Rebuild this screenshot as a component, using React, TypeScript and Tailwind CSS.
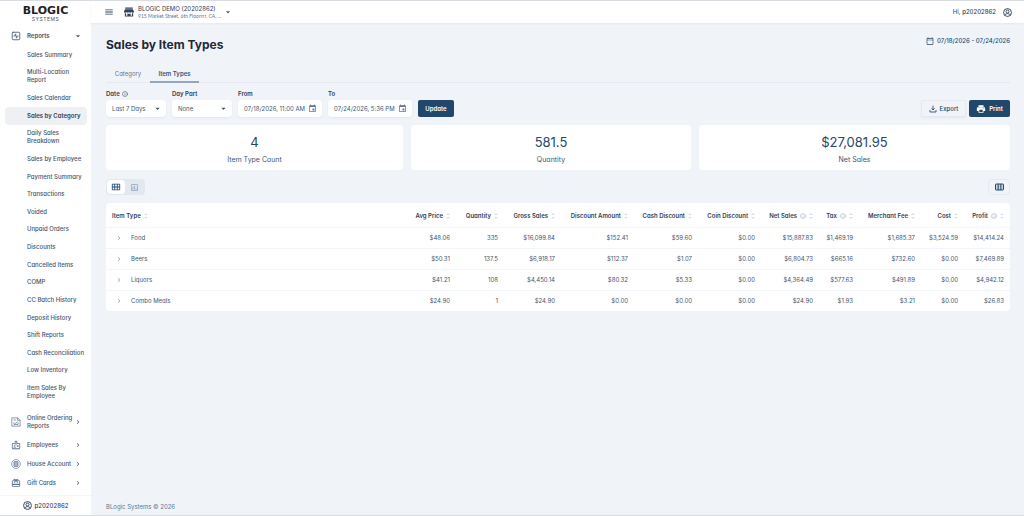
import React, { useState } from "react";
import { FaCaretDown } from "react-icons/fa";
import {
  MdCardGiftcard,
  MdChevronRight,
  MdEvent,
  MdMenu,
  MdOutlineBadge,
  MdOutlineCalendarToday,
  MdOutlineCalendarViewMonth,
  MdOutlinePoll,
  MdPrint,
} from "react-icons/md";
import { Info, SquareActivity } from "lucide-react";

const reports = [
  "Sales Summary",
  "Multi-Location Report",
  "Sales Calendar",
  "Sales by Category",
  "Daily Sales Breakdown",
  "Sales by Employee",
  "Payment Summary",
  "Transactions",
  "Voided",
  "Unpaid Orders",
  "Discounts",
  "Cancelled Items",
  "COMP",
  "CC Batch History",
  "Deposit History",
  "Shift Reports",
  "Cash Reconciliation",
  "Low Inventory",
  "Item Sales By Employee",
];

const columns = [
  { name: "Avg Price", width: "w-[48px]" },
  { name: "Quantity", width: "w-[48px]" },
  { name: "Gross Sales", width: "w-[57px]" },
  { name: "Discount Amount", width: "w-[73px]" },
  { name: "Cash Discount", width: "w-[64px]" },
  { name: "Coin Discount", width: "w-[63px]" },
  { name: "Net Sales", width: "w-[58px]", info: true },
  { name: "Tax", width: "w-[40px]", info: true },
  { name: "Merchant Fee", width: "w-[62px]" },
  { name: "Cost", width: "w-[43px]" },
  { name: "Profit", width: "w-[46px]", info: true },
];

const rows = [
  {
    name: "Food",
    values: ["$48.06", "335", "$16,099.84", "$152.41", "$59.60", "$0.00", "$15,887.83", "$1,469.19", "$1,685.37", "$3,524.59", "$14,414.24"],
  },
  {
    name: "Beers",
    values: ["$50.31", "137.5", "$6,918.17", "$112.37", "$1.07", "$0.00", "$6,804.73", "$665.16", "$732.60", "$0.00", "$7,469.89"],
  },
  {
    name: "Liquors",
    values: ["$41.21", "108", "$4,450.14", "$80.32", "$5.33", "$0.00", "$4,364.49", "$577.63", "$491.89", "$0.00", "$4,942.12"],
  },
  {
    name: "Combo Meals",
    values: ["$24.90", "1", "$24.90", "$0.00", "$0.00", "$0.00", "$24.90", "$1.93", "$3.21", "$0.00", "$26.83"],
  },
];

const stats = [
  { value: "4", label: "Item Type Count" },
  { value: "581.5", label: "Quantity" },
  { value: "$27,081.95", label: "Net Sales" },
];

function StoreIcon() {
  return (
    <svg viewBox="0 0 24 24" className="size-[10px] shrink-0 text-[#334155]" fill="currentColor" aria-hidden="true">
      <path d="M3 1h18v3H3zM2.5 5.5h19L24 11c0 2-1.300 3-3 3s-2.500-1-3-2c-.5 1-1.500 2-3 2s-2.500-1-3-2c-.5 1-1.500 2-3 2s-2.500-1-3-2c-.5 1-1.300 2-3 2s-3-1-3-3z" />
      <path d="M2 15h3v6h3v-5h8v5h3v-6h3v8H2zM10 18h4v3h-4z" />
    </svg>
  );
}

function UserIcon() {
  return (
    <svg viewBox="0 0 24 24" className="size-[9px] shrink-0" fill="none" stroke="currentColor" strokeWidth="2.5" aria-hidden="true">
      <circle cx="12" cy="12" r="10.5" />
      <circle cx="12" cy="9.5" r="4" />
      <path d="M4.5 19c2-3 4.500-4 7.500-4s5.500 1 7.500 4" />
    </svg>
  );
}

function OrderingIcon() {
  return (
    <svg viewBox="0 0 24 24" className="size-[10px]" fill="none" stroke="currentColor" strokeWidth="1.7" aria-hidden="true">
      <path d="M16 2H2v20h20V8zM16 2v6h6M7 13v5h10v-5M9 14l2 2 5-5M6 7h6" />
    </svg>
  );
}

function HouseAccountIcon() {
  return (
    <svg viewBox="0 0 24 24" className="size-[10px]" fill="none" stroke="currentColor" strokeWidth="1.7" aria-hidden="true">
      <circle cx="12" cy="12" r="10.5" />
      <path d="M8 6h8v12H8zM6 9h12M6 12h12M6 15h12" />
    </svg>
  );
}

function ExportIcon() {
  return (
    <svg viewBox="0 0 24 24" className="size-2" fill="none" stroke="currentColor" strokeWidth="2.5" aria-hidden="true">
      <path d="M12 2v13M7 10l5 5 5-5M3 15v6h18v-6" />
    </svg>
  );
}

function ColumnsIcon() {
  return (
    <svg viewBox="0 0 27 24" className="h-2 w-[9px]" fill="none" stroke="currentColor" strokeWidth="3" aria-hidden="true">
      <rect x="1.5" y="3" width="24" height="18" rx="2" className="fill-[#c5d3e0]" />
      <path d="M9.5 3v18M17.5 3v18" />
    </svg>
  );
}

function Sorter() {
  return (
    <svg viewBox="0 0 8 12" className="h-[6px] w-1 shrink-0 text-slate-400" fill="none" stroke="currentColor" aria-hidden="true">
      <path d="M1.5 4L4 1.5L6.5 4M1.5 8L4 10.5L6.5 8" />
    </svg>
  );
}

function Select({ id, label, value, info }: { id: string; label: string; value: string; info?: boolean }) {
  return (
    <div className="w-[60px]">
      <label htmlFor={id} className="flex h-2 items-center gap-0.5 text-[6px] font-semibold text-[#334155]">
        {label}
        {info && <Info className="size-[6px]" strokeWidth={2} />}
      </label>
      <div className="relative mt-0.5">
        <select
          id={id}
          className="h-[17px] w-full appearance-none rounded-sm bg-white pl-[6px] text-[6px] text-slate-600 shadow-xs"
        >
          <option>{value}</option>
        </select>
        <FaCaretDown className="pointer-events-none absolute top-[5px] right-[5px] size-[7px] text-slate-600" />
      </div>
    </div>
  );
}

function DateInput({ id, label, value }: { id: string; label: string; value: string }) {
  return (
    <div className="w-[84px]">
      <label htmlFor={id} className="flex h-2 items-center text-[6px] font-semibold text-[#334155]">
        {label}
      </label>
      <div className="mt-0.5 flex h-[17px] items-center rounded-sm bg-white pr-[5px] pl-[6px] shadow-xs">
        <input id={id} defaultValue={value} className="w-full min-w-0 text-[6px] text-slate-600 outline-none" />
        <MdEvent className="size-[9px] shrink-0 text-slate-500" />
      </div>
    </div>
  );
}

export default function App() {
  const [view, setView] = useState<"table" | "chart">("table");

  const groups = [
    { name: "Online Ordering Reports", icon: <OrderingIcon />, height: "h-[26px]" },
    { name: "Employees", icon: <MdOutlineBadge className="size-[10px]" />, height: "h-[19px]" },
    { name: "House Account", icon: <HouseAccountIcon />, height: "h-[19px]" },
    { name: "Gift Cards", icon: <MdCardGiftcard className="size-[10px]" />, height: "h-[19px]" },
  ];

  return (
    <div className="flex min-h-screen border-y border-[#d9dce0] bg-[#f0f4f9] font-['Inter','Liberation_Sans',sans-serif] text-[6px] leading-[8px] text-[#334155] [font-feature-settings:'cv11']">
      <aside className="flex w-[91px] shrink-0 flex-col bg-white">
        <a href="#home" className="block pt-[5px] text-center text-[#222]">
          <span className="block font-['DejaVu_Sans',sans-serif] text-[11px] leading-[10px] font-bold">BLOGIC</span>
          <span className="block text-[5px] leading-[6px] tracking-widest text-slate-600">SYSTEMS</span>
        </a>

        <nav className="flex flex-1 flex-col font-medium text-slate-600">
          <button className="mt-1 flex h-[20px] items-center pr-[10px] pl-[11px] text-left font-semibold">
            <SquareActivity className="mr-[6px] size-[10px]" />
            <span className="flex-1">Reports</span>
            <FaCaretDown className="size-[6px]" />
          </button>
          <ul className="flex grow flex-col pr-1 pl-[5px]">
            {reports.map((name) => (
              <li key={name} className="flex grow">
                <a
                  href="#report"
                  className={
                    name === "Sales by Category"
                      ? "flex flex-1 items-center rounded-sm bg-[#eef0f3] py-[3px] pl-[22px] font-semibold text-slate-700"
                      : "flex flex-1 items-center py-[3px] pr-[2px] pl-[22px]"
                  }
                >
                  {name}
                </a>
              </li>
            ))}
          </ul>
          <div className="mt-1 mb-[3px]">
            {groups.map((g) => (
              <button key={g.name} className={`flex w-full items-center pr-[9px] pl-[11px] text-left ${g.height}`}>
                <span className="mr-[6px] w-[10px] shrink-0 text-slate-500">{g.icon}</span>
                <span className="flex-1">{g.name}</span>
                <MdChevronRight className="-ml-px size-2 shrink-0" />
              </button>
            ))}
          </div>
        </nav>

        <div className="flex h-[20px] items-center justify-center gap-[3px] border-t border-slate-100 font-medium text-slate-700">
          <UserIcon />
          p20202862
        </div>
      </aside>

      <div className="flex min-w-0 flex-1 flex-col">
        <header className="flex h-[22px] items-center bg-white pr-[12px] pl-[13px] shadow-xs">
          <button aria-label="Toggle menu">
            <MdMenu className="size-[10px] text-slate-700" />
          </button>
          <button className="ml-[10px] flex items-center text-left">
            <StoreIcon />
            <span className="ml-1 block">
              <span className="block text-slate-700">BLOGIC DEMO (20202862)</span>
              <span className="block font-['Lato',sans-serif] text-[5px] leading-[7px] text-slate-500">
                915 Market Street, 6th Floorrrr, CA, ...
              </span>
            </span>
            <FaCaretDown className="ml-1 size-[6px] text-slate-600" />
          </button>
          <div className="ml-auto flex items-center gap-[7px]">
            <span>
              Hi, <span className="font-medium">p20202862</span>
            </span>
            <UserIcon />
          </div>
        </header>

        <main className="flex-1 pr-[14px] pl-[15px]">
          <div className="flex h-[36px] items-start justify-between pt-[14px]">
            <h1 className="text-[12px] leading-[16px] font-bold text-[#1e293b]">Sales by Item Types</h1>
            <div className="flex items-center gap-[3px] font-medium text-[#24476b]">
              <MdOutlineCalendarToday className="size-2" />
              07/18/2026 - 07/24/2026
            </div>
          </div>

          <div className="mt-[6px] flex h-[18px] border-b border-[#e6eaf0]">
            <button className="w-[44px] text-slate-500">Category</button>
            <button className="-mb-px w-[49px] border-b-2 border-[#8fa8c0] pt-px font-semibold text-[#34567a]">Item Types</button>
          </div>

          <div className="mt-[7px] flex items-end">
            <div className="flex items-end gap-[6px]">
              <Select id="date" label="Date" value="Last 7 Days" info />
              <Select id="day-part" label="Day Part" value="None" />
              <DateInput id="from" label="From" value="07/18/2026, 11:00 AM" />
              <DateInput id="to" label="To" value="07/24/2026, 5:36 PM" />
              <button className="h-[17px] w-[36px] rounded-xs bg-[#21476b] font-semibold text-white">Update</button>
            </div>
            <div className="ml-auto flex gap-[3px]">
              <button className="flex h-[17px] w-[45px] items-center justify-center gap-[3px] rounded-xs border border-[#e6eaf0] font-medium text-[#24476b] shadow-xs">
                <ExportIcon />
                Export
              </button>
              <button className="flex h-[17px] w-[41px] items-center justify-center gap-[3px] rounded-xs bg-[#21476b] font-semibold text-white">
                <MdPrint className="size-[10px]" />
                Print
              </button>
            </div>
          </div>

          <section className="mt-2 grid grid-cols-[297fr_280fr_311fr] gap-2">
            {stats.map((s) => (
              <div key={s.label} className="h-[45px] rounded-sm bg-white pt-[9px] text-center">
                <p className="text-[13px] leading-[16px] text-[#24476b]">{s.value}</p>
                <p className="mt-[5px] text-[7px] leading-[10px] text-slate-600">{s.label}</p>
              </div>
            ))}
          </section>

          <div className="mt-[9px] flex items-center justify-between">
            <div className="flex h-[16px] rounded-sm bg-[#e1e8f0] p-px">
              <button
                aria-label="Table view"
                onClick={() => setView("table")}
                className={`flex w-[18px] items-center justify-center rounded-sm ${view === "table" ? "bg-white text-[#24476b]" : "text-slate-400"}`}
              >
                <MdOutlineCalendarViewMonth className="size-[10px]" />
              </button>
              <button
                aria-label="Chart view"
                onClick={() => setView("chart")}
                className={`flex w-[19px] items-center justify-center rounded-sm ${view === "chart" ? "bg-white text-[#24476b]" : "text-slate-400"}`}
              >
                <MdOutlinePoll className="size-[9px]" />
              </button>
            </div>
            <button
              aria-label="Choose columns"
              className="flex h-[16px] w-[22px] items-center justify-center rounded-sm border border-[#e6eaf0] text-[#24476b]"
            >
              <ColumnsIcon />
            </button>
          </div>

          <div className="mt-2 overflow-hidden rounded-sm bg-white">
            <table className="w-full table-fixed whitespace-nowrap">
              <thead>
                <tr className="h-[24px] border-b border-slate-100">
                  <th className="pt-[3px] pl-[6px] text-left font-semibold">
                    <span className="flex items-center gap-[3px]">
                      Item Type
                      <Sorter />
                    </span>
                  </th>
                  {columns.map((c) => (
                    <th key={c.name} className={`pt-[3px] pr-[6px] font-semibold ${c.width}`}>
                      <span className="flex items-center justify-end gap-[3px]">
                        {c.name}
                        {c.info && <Info className="size-[6px] shrink-0 text-slate-400" />}
                        <Sorter />
                      </span>
                    </th>
                  ))}
                </tr>
              </thead>
              <tbody className="text-slate-600">
                {rows.map((r) => (
                  <tr key={r.name} className="h-[21px] border-b border-slate-100 last:border-0">
                    <td className="pl-[9px]">
                      <span className="flex items-center">
                        <button aria-label={`Expand ${r.name}`} className="mr-2">
                          <MdChevronRight className="size-2 text-slate-400" />
                        </button>
                        {r.name}
                      </span>
                    </td>
                    {r.values.map((v, i) => (
                      <td key={i} className="pr-[6px] text-right">
                        {v}
                      </td>
                    ))}
                  </tr>
                ))}
              </tbody>
            </table>
          </div>
        </main>

        <footer className="px-[15px] pb-1 text-slate-500">BLogic Systems © 2026</footer>
      </div>
    </div>
  );
}
